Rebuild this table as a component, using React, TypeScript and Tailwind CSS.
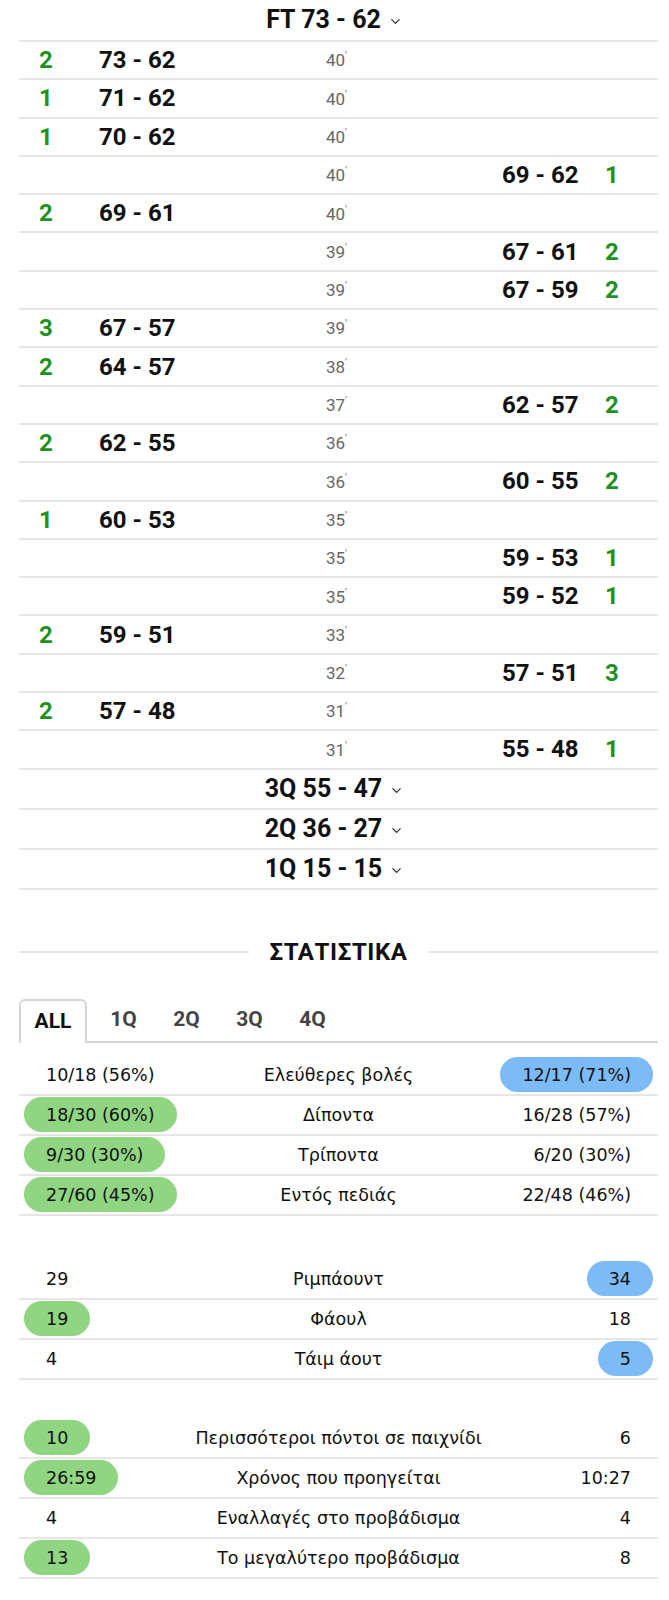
import { ChevronDown } from 'lucide-react'

type Play = { side: 'L' | 'R'; pts: number; score: string; min: string }

const plays: Play[] = [
  { side: 'L', pts: 2, score: '73 - 62', min: '40' },
  { side: 'L', pts: 1, score: '71 - 62', min: '40' },
  { side: 'L', pts: 1, score: '70 - 62', min: '40' },
  { side: 'R', pts: 1, score: '69 - 62', min: '40' },
  { side: 'L', pts: 2, score: '69 - 61', min: '40' },
  { side: 'R', pts: 2, score: '67 - 61', min: '39' },
  { side: 'R', pts: 2, score: '67 - 59', min: '39' },
  { side: 'L', pts: 3, score: '67 - 57', min: '39' },
  { side: 'L', pts: 2, score: '64 - 57', min: '38' },
  { side: 'R', pts: 2, score: '62 - 57', min: '37' },
  { side: 'L', pts: 2, score: '62 - 55', min: '36' },
  { side: 'R', pts: 2, score: '60 - 55', min: '36' },
  { side: 'L', pts: 1, score: '60 - 53', min: '35' },
  { side: 'R', pts: 1, score: '59 - 53', min: '35' },
  { side: 'R', pts: 1, score: '59 - 52', min: '35' },
  { side: 'L', pts: 2, score: '59 - 51', min: '33' },
  { side: 'R', pts: 3, score: '57 - 51', min: '32' },
  { side: 'L', pts: 2, score: '57 - 48', min: '31' },
  { side: 'R', pts: 1, score: '55 - 48', min: '31' },
]

type Stat = { home: string; label: string; away: string; win?: 'home' | 'away' }

const groups: Stat[][] = [
  [
    { home: '10/18 (56%)', label: 'Ελεύθερες βολές', away: '12/17 (71%)', win: 'away' },
    { home: '18/30 (60%)', label: 'Δίποντα', away: '16/28 (57%)', win: 'home' },
    { home: '9/30 (30%)', label: 'Τρίποντα', away: '6/20 (30%)', win: 'home' },
    { home: '27/60 (45%)', label: 'Εντός πεδιάς', away: '22/48 (46%)', win: 'home' },
  ],
  [
    { home: '29', label: 'Ριμπάουντ', away: '34', win: 'away' },
    { home: '19', label: 'Φάουλ', away: '18', win: 'home' },
    { home: '4', label: 'Τάιμ άουτ', away: '5', win: 'away' },
  ],
  [
    { home: '10', label: 'Περισσότεροι πόντοι σε παιχνίδι', away: '6', win: 'home' },
    { home: '26:59', label: 'Χρόνος που προηγείται', away: '10:27', win: 'home' },
    { home: '4', label: 'Εναλλαγές στο προβάδισμα', away: '4' },
    { home: '13', label: 'Το μεγαλύτερο προβάδισμα', away: '8', win: 'home' },
  ],
]

const groupGap = ['mt-[13px]', 'mt-[44px]', 'mt-[39px]']

function PeriodHeader({ title, h }: { title: string; h: string }) {
  return (
    <div className={`flex items-center justify-center gap-[7px] border-b-2 border-[#e6e6e6] pr-[8px] ${h}`}>
      <span className="text-[25px] font-bold text-[#111]">{title}</span>
      <ChevronDown size={15} strokeWidth={2} className="mt-[3px] text-[#333]" />
    </div>
  )
}

function Value({ v, on }: { v: string; on?: 'green' | 'blue' }) {
  const bg = on === 'green' ? 'bg-[#90d582]' : on === 'blue' ? 'bg-[#7dbbf6]' : ''
  return <span className={`inline-flex h-[35px] items-center rounded-full px-[22px] ${bg}`}>{v}</span>
}

export default function App() {
  return (
    <div className="min-h-screen bg-white pl-[19px] pr-[11px] font-['Roboto',sans-serif]">
      <PeriodHeader title="FT 73 - 62" h="h-[42px]" />

      {plays.map((p, i) => (
        <div key={i} className="flex h-[38.3px] items-center border-b-2 border-[#e6e6e6]">
          <div className="w-[80px] pl-[20px] text-[24px] font-bold text-[#1f911f]">{p.side === 'L' ? p.pts : ''}</div>
          <div className="w-[227px] text-[24px] font-bold text-[#111]">{p.side === 'L' ? p.score : ''}</div>
          <div className="w-[176px] pt-[2px] text-[17px] text-[#666]">
            {p.min}
            <span className="align-top text-[11px]">'</span>
          </div>
          <div className="w-[103px] text-[24px] font-bold text-[#111]">{p.side === 'R' ? p.score : ''}</div>
          <div className="text-[24px] font-bold text-[#1f911f]">{p.side === 'R' ? p.pts : ''}</div>
        </div>
      ))}

      <PeriodHeader title="3Q 55 - 47" h="h-[40px]" />
      <PeriodHeader title="2Q 36 - 27" h="h-[40px]" />
      <PeriodHeader title="1Q 15 - 15" h="h-[40px]" />

      {/* Statistics */}
      <div className="mt-[42px] flex h-[40px] items-center gap-[20px]">
        <div className="h-[2px] flex-1 bg-[#e6e6e6]" />
        <span className="text-[24px] font-bold tracking-wide text-[#111]">ΣΤΑΤΙΣΤΙΚΑ</span>
        <div className="h-[2px] flex-1 bg-[#e6e6e6]" />
      </div>

      <div className="mt-[27px] flex h-[44px] items-stretch border-b-2 border-[#d6d6d6] text-[21px] font-bold">
        <div className="-mb-[2px] flex w-[68px] items-center justify-center rounded-t-[6px] border-2 border-b-0 border-[#d6d6d6] bg-white text-[#111]">
          ALL
        </div>
        <div className="ml-[5px] flex">
          {['1Q', '2Q', '3Q', '4Q'].map((t) => (
            <div key={t} className="flex w-[63px] items-center justify-center text-[#444]">
              {t}
            </div>
          ))}
        </div>
      </div>

      <div className="font-['DejaVu_Sans',sans-serif] text-[17.5px] text-[#111]">
        {groups.map((g, gi) => (
          <div key={gi} className={groupGap[gi]}>
            {g.map((s, i) => (
              <div key={i} className="grid h-[40px] grid-cols-[1fr_auto_1fr] items-center border-b-2 border-[#e6e6e6] px-[5px]">
                <div className="flex justify-start">
                  <Value v={s.home} on={s.win === 'home' ? 'green' : undefined} />
                </div>
                <div className="text-center">{s.label}</div>
                <div className="flex justify-end">
                  <Value v={s.away} on={s.win === 'away' ? 'blue' : undefined} />
                </div>
              </div>
            ))}
          </div>
        ))}
      </div>
    </div>
  )
}
